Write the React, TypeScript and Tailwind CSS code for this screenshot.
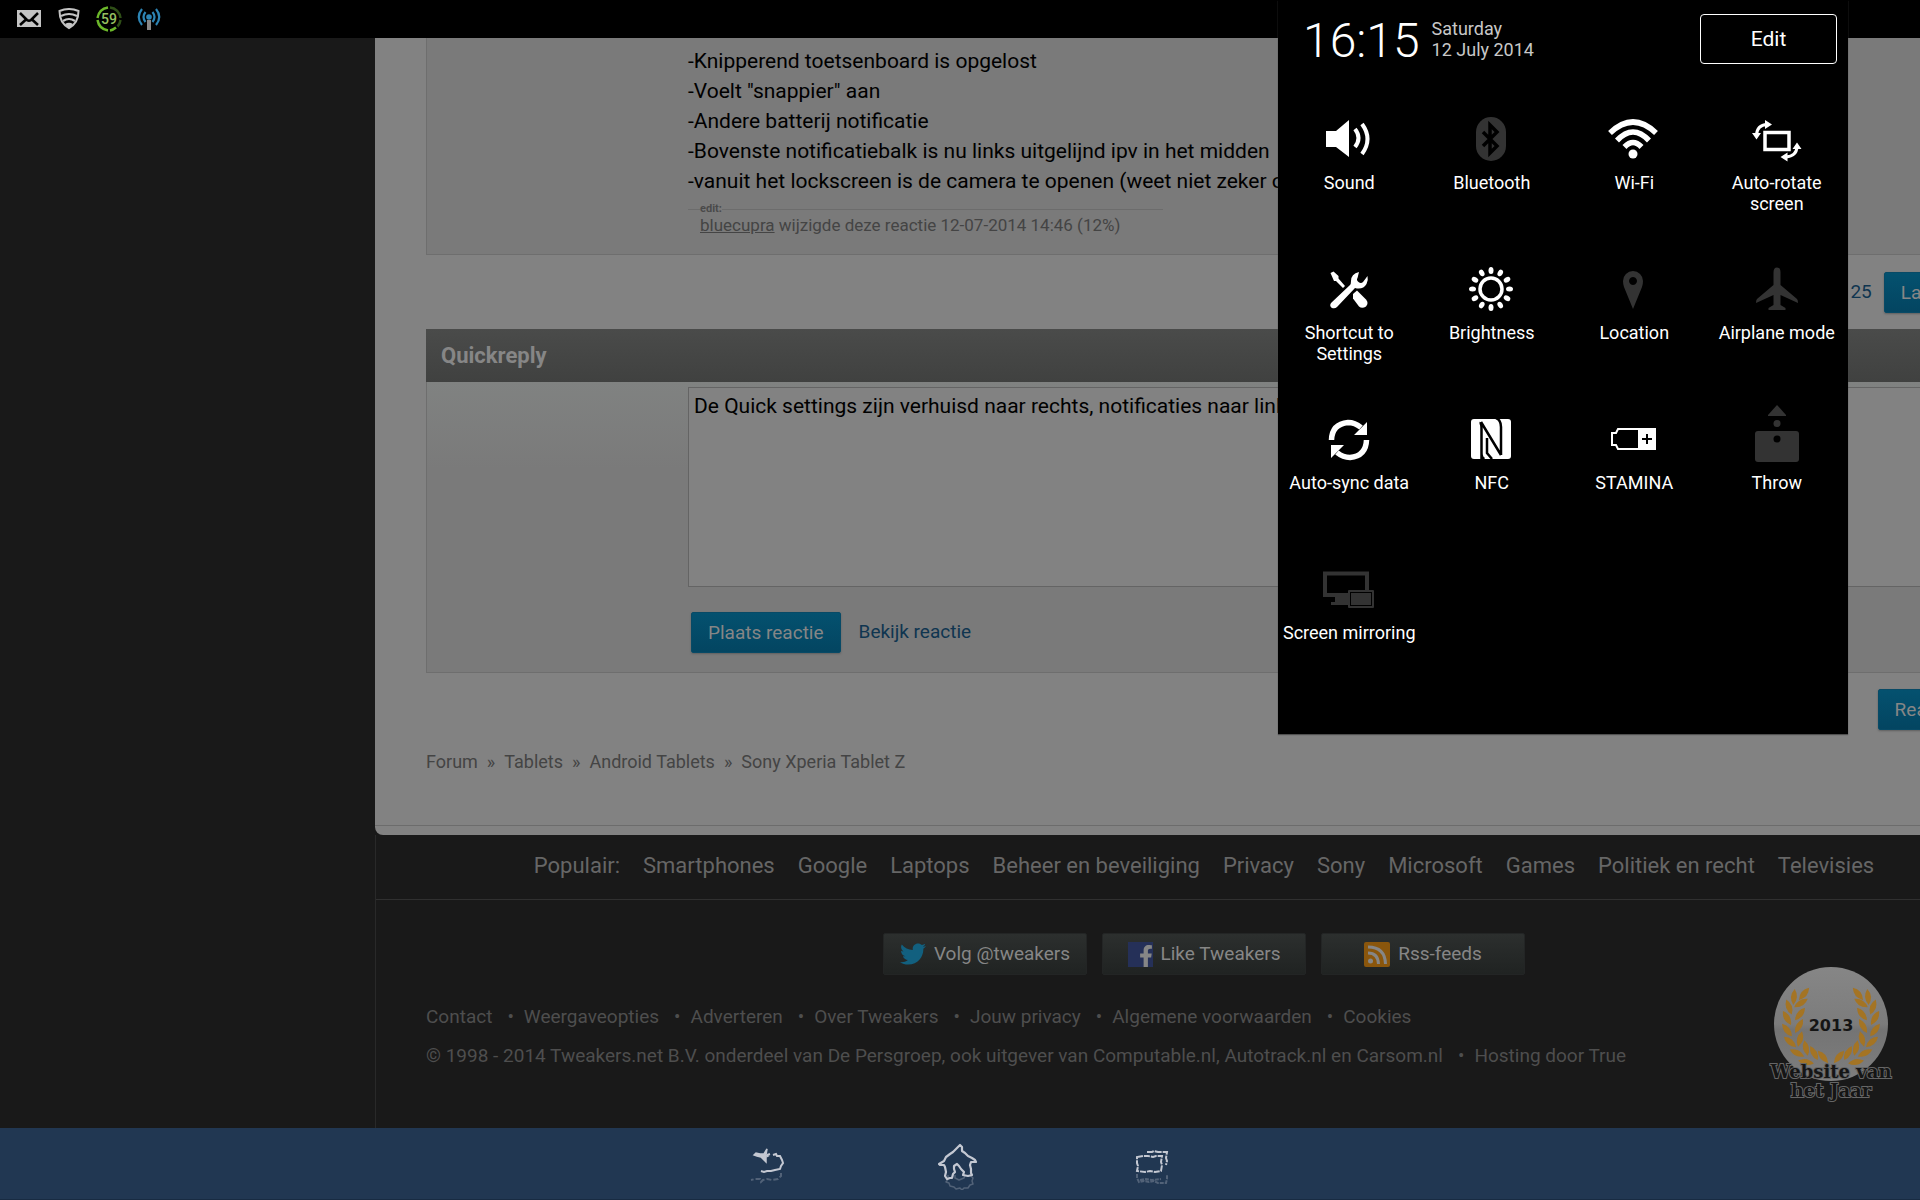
import React from 'react';
import { FaFacebookF, FaTwitter } from 'react-icons/fa';

type Toggle = {
  label: string;
  on: boolean;
  art: React.ReactNode;
};

// every drawing sits in a 56x60 box and takes its colour from the tile
const toggles: Toggle[] = [
  {
    label: 'Sound',
    on: true,
    art: (
      <>
        <path d="M5 22h10L28 11v37L15 38H5z" fill="currentColor" />
        <path d="M34 20q7 9 0 18M41 15q11 15 0 30" fill="none" stroke="currentColor" strokeWidth="4" />
      </>
    ),
  },
  {
    label: 'Bluetooth',
    on: false,
    art: (
      <>
        <rect x="12" y="8" width="30" height="44" rx="15" fill="currentColor" />
        <path d="M19 23l14 14-7 7V16l7 7-14 14" fill="none" stroke="#000" strokeWidth="3.500" />
      </>
    ),
  },
  {
    label: 'Wi-Fi',
    on: true,
    art: (
      <>
        <path
          d="M4 24q23-22 46 0M11 31.500q16-17 32 0M18.500 38q8.500-9 17 0"
          fill="none"
          stroke="currentColor"
          strokeWidth="5.500"
        />
        <circle cx="27" cy="45" r="4.500" fill="currentColor" />
      </>
    ),
  },
  {
    label: 'Auto-rotate screen',
    on: true,
    art: (
      <>
        <rect x="16" y="23.500" width="24" height="17" fill="none" stroke="currentColor" strokeWidth="3.500" />
        <path d="M7.500 26Q8 16 18 15.500M48 38q-.5 9-11 10" fill="none" stroke="currentColor" strokeWidth="3" />
        <path d="M3 24h9l-4.500 6.500zM16 11v9l7-4.500zM43.500 40h9L48 33.500zM38.500 43.500v9L31.500 48z" fill="currentColor" />
      </>
    ),
  },
  {
    label: 'Shortcut to Settings',
    on: true,
    art: (
      <>
        <path d="M9.500 14l3-1.500 5 4.500v2.500l6.500 7.500-2 2-7-7h-2z" fill="currentColor" />
        <path d="M32 35l4-3.500 9 9q3 3.500 0 7-4 2.500-7 0l-6-8z" fill="currentColor" />
        <path
          d="M38 13q-8 2-8 9 0 3-1 4L10 44q-2 3 1 5 3 1 5-1l18-19q8 2 11.500-4 2-4 1-8l-4.500 6q-2 2-4.500 0-2.500-2-1-4z"
          fill="currentColor"
        />
      </>
    ),
  },
  {
    label: 'Brightness',
    on: true,
    art: (
      <>
        <circle cx="27" cy="30" r="11" fill="none" stroke="currentColor" strokeWidth="3.500" />
        {[0, 30, 60, 90, 120, 150, 180, 210, 240, 270, 300, 330].map((a) => (
          <ellipse key={a} cx="27" cy="11.500" rx="2.500" ry="3.500" fill="currentColor" transform={`rotate(${a} 27 30)`} />
        ))}
      </>
    ),
  },
  {
    label: 'Location',
    on: false,
    art: (
      <path
        fillRule="evenodd"
        d="M27 50L18 28q-1-3-1-6a10 10 0 0 1 20 0q0 3-1 6zM27 18a4 4 0 1 0 .01 0z"
        fill="currentColor"
      />
    ),
  },
  {
    label: 'Airplane mode',
    on: false,
    art: (
      <path
        d="M28 8.500q3.500 0 3.500 5V26L48 40q1 1 1 4L31.500 36v10l5 3v2h-17v-2l5-3V36L7 44q0-3 1-4l16.500-14V13.500q0-5 3.500-5z"
        fill="currentColor"
      />
    ),
  },
  {
    label: 'Auto-sync data',
    on: true,
    art: (
      <>
        <path d="M10.500 31Q11 15 27 13.500q7 0 13 5M45.500 31Q45 47 29 48.500q-7 0-13-5" fill="none" stroke="currentColor" strokeWidth="5.500" />
        <path d="M46 13v13H33zM10 49V36h13z" fill="currentColor" />
      </>
    ),
  },
  {
    label: 'NFC',
    on: true,
    art: (
      <>
        <rect x="7" y="10" width="40" height="40" rx="3" fill="currentColor" />
        <path
          d="M17.500 50V20q0-6-2-6M17 13l20 33M37 46V18q0-7-5-9M17.500 44q0 5 3 6M23 29v15l5 6"
          fill="none"
          stroke="#000"
          strokeWidth="2.500"
        />
      </>
    ),
  },
  {
    label: 'STAMINA',
    on: true,
    art: (
      <>
        <path d="M12 20h36v20H12l-2-4H6V24h4z" fill="none" stroke="currentColor" strokeWidth="2" />
        <path d="M32 19h18v22H32z" fill="currentColor" />
        <path d="M41 25v10M36 30h10" stroke="#000" strokeWidth="2" />
      </>
    ),
  },
  {
    label: 'Throw',
    on: false,
    art: (
      <>
        <path d="M28-4l9 10v1H19V6z" fill="currentColor" />
        <circle cx="28" cy="14.500" r="3.500" fill="currentColor" />
        <rect x="6" y="22" width="44" height="31" rx="3" fill="currentColor" />
        <circle cx="28" cy="30" r="3.500" fill="#000" />
      </>
    ),
  },
  {
    label: 'Screen mirroring',
    on: false,
    art: (
      <>
        <path d="M46 31V14.500H4V36h24" fill="none" stroke="currentColor" strokeWidth="4" />
        <path d="M14 37h13v9H10v-3h4z" fill="currentColor" />
        <rect x="27" y="31" width="26" height="18" rx="1" fill="currentColor" />
        <rect x="29.500" y="33.500" width="21" height="13" fill="none" stroke="#000" />
      </>
    ),
  },
];

const popular = [
  'Smartphones',
  'Google',
  'Laptops',
  'Beheer en beveiliging',
  'Privacy',
  'Sony',
  'Microsoft',
  'Games',
  'Politiek en recht',
  'Televisies',
];

const crumbs = ['Forum', 'Tablets', 'Android Tablets', 'Sony Xperia Tablet Z'];

const footerLinks = [
  'Contact',
  'Weergaveopties',
  'Adverteren',
  'Over Tweakers',
  'Jouw privacy',
  'Algemene voorwaarden',
  'Cookies',
];

const postLines = [
  '-Knipperend toetsenboard is opgelost',
  '-Voelt "snappier" aan',
  '-Andere batterij notificatie',
  '-Bovenste notificatiebalk is nu links uitgelijnd ipv in het midden',
  '-vanuit het lockscreen is de camera te openen (weet niet zeker of',
];

// x, y, rotation of each leaf on the left branch
const leaves = [
  [25, 31, 5],
  [35, 28, 40],
  [20, 41, -20],
  [32, 37, 58],
  [18, 52, -30],
  [31, 48, 38],
  [18, 64, -38],
  [30, 60, 30],
  [21, 76, -50],
  [31, 73, 15],
  [28, 87, -65],
  [37, 82, -12],
  [37, 96, -80],
  [45, 87, -28],
  [54, 91, -40],
];

function StatusBar() {
  return (
    <header className="h-[38px] shrink-0 bg-black flex items-center px-[9px]">
      <span className="w-10 flex justify-center">
        <svg width="24" height="18" viewBox="0 0 24 18">
          <path d="M0 0h24v17H0z" fill="#c4c4c4" />
          <path d="M3 3l7 7q2 1.500 4 0l7-7M3 15l6-5.500M21 15l-6-5.500" fill="none" stroke="#000" strokeWidth="2.500" />
        </svg>
      </span>
      <span className="w-10 flex justify-center">
        <svg width="22" height="22" viewBox="0 0 22 22">
          <path d="M1.500 3Q11-1 20.500 3q0 12-9.500 17Q1.500 15 1.500 3z" fill="none" stroke="#c4c4c4" strokeWidth="2" />
          <path d="M3 8q8-4 16 0M5 13q6-4 12 0" fill="none" stroke="#c4c4c4" strokeWidth="2.200" />
          <path d="M7 16q4-2.500 8 0l-4 4z" fill="#c4c4c4" />
        </svg>
      </span>
      <span className="w-10 flex justify-center">
        <svg width="26" height="26" viewBox="0 0 26 26">
          <path d="M14 1.500A11.500 11.500 0 0 1 24.500 12" fill="none" stroke="#2f4f17" strokeWidth="2.500" />
          <path d="M24.500 14q-.5 4-3 6.500" fill="none" stroke="#2f4f17" strokeWidth="2.500" />
          <path d="M20 21.500q-3 2.500-6 3M12 24.500Q3 23 1.500 14M1.500 12Q3 3 12 1.500" fill="none" stroke="#6cb82a" strokeWidth="2.500" />
          <text x="13" y="18" textAnchor="middle" fontSize="14" fontWeight="500" fill="#96c060" fontFamily="Roboto, sans-serif">
            59
          </text>
        </svg>
      </span>
      <span className="w-10 flex justify-center">
        <svg width="24" height="22" viewBox="0 0 24 22">
          <path d="M5 1Q-1.500 9 5 17M19 1q6.500 8 0 16M8.500 4q-4 5 0 10M15.500 4q4 5 0 10" fill="none" stroke="#2d85b5" strokeWidth="2.200" />
          <circle cx="12" cy="9" r="2.800" fill="#2d85b5" />
          <path d="M10 12h4v10h-4z" fill="#888" />
        </svg>
      </span>
    </header>
  );
}

function QuickSettings() {
  return (
    <section className="absolute top-0 right-[72px] z-20 w-[570px] bg-black text-white shadow-[0_1px_1px_#505050]">
      <div className="flex items-start h-[79px] pl-[25px] pr-[11px]">
        <time className="text-[48px] leading-[58px] font-light pt-3">16:15</time>
        <div className="ml-3 pt-[18px] text-[18px] leading-[21px] text-[#c8c8c8]">
          <div>Saturday</div>
          <div>12 July 2014</div>
        </div>
        <button className="ml-auto mt-[14px] w-[137px] h-[50px] pt-[2px] rounded border border-white text-[21px]">Edit</button>
      </div>
      <div className="grid grid-cols-4 pb-[55px]">
        {toggles.map((t) => (
          <button key={t.label} className="h-[150px] pt-[30px] flex flex-col items-center whitespace-nowrap">
            <svg
              width="56"
              height="60"
              viewBox="0 0 56 60"
              className={`shrink-0 overflow-visible ${t.on ? 'text-white' : 'text-[#333333]'}`}
            >
              {t.art}
            </svg>
            <span className={`mt-[3px] text-[18px] leading-[21px] ${t.label.length > 16 ? 'w-[110px] whitespace-normal' : ''}`}>
              {t.label}
            </span>
          </button>
        ))}
      </div>
    </section>
  );
}

function Award() {
  return (
    <svg width="124" height="140" viewBox="0 0 124 140" className="absolute right-[139px] top-[66px] overflow-visible">
      <defs>
        <linearGradient id="disc" x1="0" y1="0" x2="0" y2="1">
          <stop offset="0" stopColor="#868686" />
          <stop offset="0.500" stopColor="#7c7c7c" />
          <stop offset="0.550" stopColor="#747474" />
          <stop offset="1" stopColor="#7e7e7e" />
        </linearGradient>
      </defs>
      <circle cx="62" cy="58" r="57" fill="url(#disc)" />
      {[0, 1].map((side) => (
        <g key={side} fill="#a47424" transform={side ? 'translate(124 0) scale(-1 1)' : undefined}>
          {leaves.map(([x, y, r]) => (
            <path key={`${x}-${y}`} d="M0-8Q6 0 0 8-6 0 0-8z" transform={`translate(${x} ${y}) rotate(${r})`} />
          ))}
        </g>
      ))}
      <g textAnchor="middle" fill="#151515">
        <text x="62" y="65" fontSize="16" fontWeight="700" fontFamily="DejaVu Sans, sans-serif">
          2013
        </text>
        <g fontSize="18" fontFamily="DejaVu Serif, serif" stroke="#666666" strokeWidth="2" paintOrder="stroke" fontWeight="700">
          <text x="62" y="112">
            Website van
          </text>
          <text x="62" y="131">
            het Jaar
          </text>
        </g>
      </g>
    </svg>
  );
}

function SocialButton({ label, children }: { label: string; children: React.ReactNode }) {
  return (
    <a
      href="#"
      className="w-[204px] h-[42px] flex items-center justify-center gap-2 rounded-xs border border-[#232525] bg-gradient-to-b from-[#2c2f2e] to-[#202322] text-[19px]"
    >
      {children}
      {label}
    </a>
  );
}

function BlueButton({ label }: { label: string }) {
  return (
    <button className="h-[41px] px-4 pt-[2px] rounded-xs border border-[#084a66] bg-gradient-to-b from-[#04516f] to-[#034561] text-[#868686] text-[19px] shadow-[0_1px_2px_#606060]">
      {label}
    </button>
  );
}

function Footer() {
  return (
    <footer className="border-l border-[#292929] text-[19px] leading-[24px] text-[#4e4e4e]">
      <nav className="h-[65px] pb-[3px] flex items-center justify-center gap-[23px] border-b border-[#303030] text-[22px] text-[#666666]">
        <span>Populair:</span>
        {popular.map((p) => (
          <a key={p} href="#">
            {p}
          </a>
        ))}
      </nav>
      <div className="relative h-[228px] px-[50px] pt-[33px]">
        <div className="flex justify-center gap-[15px] text-[#868686]">
          <SocialButton label="Volg @tweakers">
            <FaTwitter className="w-[26px] h-[26px] text-[#12607f]" />
          </SocialButton>
          <SocialButton label="Like Tweakers">
            <span className="w-[25px] h-[25px] bg-[#253058] flex items-end justify-end">
              <FaFacebookF className="w-[14px] h-[22px] text-[#868686]" />
            </span>
          </SocialButton>
          <SocialButton label="Rss-feeds">
            <svg width="26" height="25" viewBox="0 0 26 25">
              <rect width="26" height="25" rx="2" fill="#8a560c" />
              <circle cx="6.500" cy="19" r="2.500" fill="#868686" />
              <path d="M4 11q10 0 10.500 11M4 5q17 0 17.500 17" fill="none" stroke="#868686" strokeWidth="3" />
            </svg>
          </SocialButton>
        </div>
        <ul className="mt-[30px] flex">
          {footerLinks.map((l, i) => (
            <li key={l} className="flex">
              {i > 0 && <span className="ml-[15px] mr-[10px]">•</span>}
              <a href="#">{l}</a>
            </li>
          ))}
        </ul>
        <p className="mt-[15px]">
          © 1998 - 2014 <a href="#">Tweakers.net B.V.</a> onderdeel van <a href="#">De Persgroep</a>, ook uitgever van{' '}
          <a href="#">Computable.nl</a>, <a href="#">Autotrack.nl</a> en <a href="#">Carsom.nl</a>
          <span className="ml-[15px] mr-[10px]">•</span>
          <a href="#">Hosting door True</a>
        </p>
        <Award />
      </div>
    </footer>
  );
}

function SystemNav() {
  return (
    <nav className="h-[72px] shrink-0 bg-[#213752] border-b border-[#182b42] flex justify-center text-[#c4c8d2]">
      <button aria-label="Back" className="w-[192px] flex justify-center pt-[14px]">
        <svg width="44" height="48" viewBox="0 0 44 48" fill="none" stroke="currentColor" strokeWidth="2">
          <path d="M21 13l3-1M27 13l3-1 1 2 3 0 2 4 1 3-2 3-1 3-5 1-4 1-4 0-3 1-3-1" />
          <path d="M8 13l2-2 4 1 4 0 3-5-1 6 2 1-2 1 0 5-5-5-4-1z" fill="currentColor" strokeWidth="1.500" />
          <path d="M35 31v3l-3 3-6 1-5-1-4 1-2 2-1-3-5 0-4 1" opacity=".3" strokeDasharray="5 2" />
        </svg>
      </button>
      <button aria-label="Home" className="w-[192px] flex justify-center pt-[14px]">
        <svg width="44" height="48" viewBox="-2 0 44 48" fill="none" stroke="currentColor" strokeWidth="2.200" strokeLinejoin="round">
          <path d="M18 5l2-2 2 2v4l3 2 3 3 4 2 3 2 1 2-5 0-1 3 1 4 0 4 1 2-4 1-5-1 1-3-3-3-2-3-2-2-3 2 0 3 1 3-2 2-1 4-2 0-3 1-2-3 1-4-1-5-1-2-4 0-1-1 5-3 2-4 4-3 3-2z" />
          <path d="M8 33l0 4-2 3 3 1 1 3 4 1 2 2 4-1 2 2 2-2 4 0 2-3 3-1-1-3 1-3-3-3M15 33v3l4 2 5-2 1-3" opacity=".3" strokeWidth="1.500" />
        </svg>
      </button>
      <button aria-label="Recent apps" className="w-[192px] flex justify-center pt-[14px]">
        <svg width="44" height="48" viewBox="0 0 44 48" fill="none" stroke="currentColor" strokeWidth="2">
          <path d="M17 10l5 0 2-1 4 1 4 0 5 0-1 6 1 3-1 4" strokeDasharray="7 1" />
          <path d="M7 15l6-1 5 0 5 1 3-1 6 0-1 6 1 3-1 6-6 1-5-1-5 1-8-1 1-5-1-3z" strokeDasharray="6 1" />
          <path d="M7 32l0 4 2 4 5-1 5 1 5-1 4 2 4 0 4 0 1-4 0-4M10 38l6-1 6 1 9-1" opacity=".3" strokeDasharray="4 1" />
        </svg>
      </button>
    </nav>
  );
}

function App() {
  return (
    <div className="relative min-h-screen flex flex-col overflow-hidden bg-[#191919] font-['Roboto',sans-serif]">
      <StatusBar />

      <main className="flex-1 pl-[375px]">
        {/* the forum page is wider than the window and runs off to the right */}
        <div className="-mr-[112px]">
          <div className="h-[797px] rounded-b-lg bg-[#828282] flex flex-col">
            <div className="flex-1 px-[51px]">
              <article className="h-[217px] pl-[261px] pt-2 bg-[#7a7a7a] border-l border-b border-[#6e6e6e] text-[21px] text-black">
                {postLines.map((line) => (
                  <p key={line} className="leading-[30px]">
                    {line}
                  </p>
                ))}
                <div className="mt-[6px] w-[475px] flex items-center text-[11px] leading-[14px] font-bold text-[#4a4a4a]">
                  <span className="w-3 h-px bg-[#6c6c6c]" />
                  edit:
                  <span className="flex-1 h-px bg-[#6c6c6c]" />
                </div>
                <p className="ml-3 text-[17px] leading-[18px] text-[#444444]">
                  <a href="#" className="underline">
                    bluecupra
                  </a>{' '}
                  wijzigde deze reactie 12-07-2014 14:46 (12%)
                </p>
              </article>

              <div className="h-[74px] flex items-center justify-end gap-3 text-[19px] text-[#0f3550]">
                <a href="#">25</a>
                <BlueButton label="Laatste" />
              </div>

              <h2 className="h-[53px] flex items-center pl-[15px] bg-gradient-to-b from-[#4a4b4a] to-[#404140] text-[22px] font-bold text-[#868686]">
                Quickreply
              </h2>
              <form className="h-[291px] pl-[261px] pt-[5px] border-l border-b border-[#6e6e6e] bg-gradient-to-b from-[#808281] via-[#7a7a7a] via-30% to-[#7a7a7a]">
                <textarea
                  aria-label="Quickreply"
                  className="block w-full h-[200px] resize-none border border-[#646464] bg-[#828282] px-[5px] py-[5px] text-[21px] leading-[27px] text-black"
                  defaultValue="De Quick settings zijn verhuisd naar rechts, notificaties naar links."
                />
                <div className="mt-[25px] pl-[3px] flex items-center gap-[18px]">
                  <BlueButton label="Plaats reactie" />
                  <a href="#" className="text-[19px] text-[#0f3550]">
                    Bekijk reactie
                  </a>
                </div>
              </form>

              <div className="mt-4 flex justify-end">
                <BlueButton label="Reageer" />
              </div>

              <nav className="mt-5 flex gap-[9px] text-[18px] leading-[24px] text-[#444444]">
                {crumbs.map((c, i) => (
                  <React.Fragment key={c}>
                    {i > 0 && <span>»</span>}
                    <a href="#">{c}</a>
                  </React.Fragment>
                ))}
              </nav>
            </div>
            <div className="h-[10px] border-t border-[#6c6c6c]" />
          </div>
          <Footer />
        </div>
      </main>

      <SystemNav />
      <QuickSettings />
    </div>
  );
}

export default App;
